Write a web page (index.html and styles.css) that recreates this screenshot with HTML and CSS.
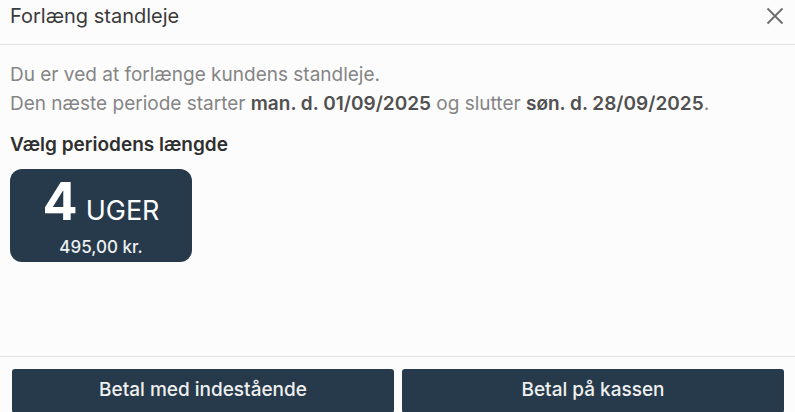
FILE: index.html
```html
<!DOCTYPE html>
<html>
<head>
  <title>Forlæng standleje</title>
  <link rel="stylesheet" href="styles.css">
</head>
<body>
  <div class="dialog">
    <div class="dialog-header">
      <h1 class="dialog-title">Forlæng standleje</h1>
      <span class="close-button">
        <svg width="18" height="18" viewBox="0 0 18 18">
          <path d="M1.5 1.5 L16.5 16.5 M16.5 1.5 L1.5 16.5" stroke="#6b6b6b" stroke-width="1.8" fill="none"/>
        </svg>
      </span>
    </div>

    <div class="dialog-body">
      <p class="info">Du er ved at forlænge kundens standleje.</p>
      <p class="info">Den næste periode starter <b>man. d. 01/09/2025</b> og slutter <b>søn. d. 28/09/2025</b>.</p>

      <h3 class="section-title">Vælg periodens længde</h3>

      <div class="period-list">
        <div class="period-card">
          <div class="period-length"><span class="period-number">4</span> UGER</div>
          <div class="period-price">495,00 kr.</div>
        </div>
      </div>
    </div>

    <div class="dialog-footer">
      <button class="pay-button">Betal med indestående</button>
      <button class="pay-button">Betal på kassen</button>
    </div>
  </div>
</body>
</html>
```

FILE: styles.css
```css
/* Basic page */
body {
  font-family: Inter, "Noto Sans", sans-serif;
  background-color: #fcfcfc;
  color: #333;
  margin: 0;
  padding: 0;
}

.dialog {
  display: flex;
  flex-direction: column;
  height: 412px;
  overflow: hidden;
}

/* Header */
.dialog-header {
  display: flex;
  justify-content: space-between;
  align-items: center;
  height: 32px;
  padding: 0 11px 12px 10px;
  border-bottom: 1px solid #e2e2e2;
}

.dialog-title {
  font-size: 20px;
  font-weight: 400;
  margin: 0;
  color: #3a3a3a;
}

.close-button {
  display: flex;
  cursor: pointer;
}

/* Body */
.dialog-body {
  flex: 1;
  padding: 15px 10px 0 10px;
}

.info {
  margin: 0;
  font-size: 19px;
  line-height: 29px;
  color: #858585;
}

.info b {
  color: #505050;
  font-weight: 600;
}

.section-title {
  margin: 15px 0 12px 0;
  font-size: 19px;
  line-height: 24px;
  font-weight: 600;
  color: #2f2f2f;
}

.period-list {
  display: flex;
  gap: 10px;
}

.period-card {
  width: 182px;
  height: 93px;
  background-color: #263a4b;
  border-radius: 12px;
  color: #fff;
  display: flex;
  flex-direction: column;
  align-items: center;
  justify-content: center;
}

.period-length {
  font-size: 27px;
  line-height: 46px;
  display: flex;
  align-items: baseline;
  gap: 8px;
  margin-top: 4px;
}

.period-number {
  font-size: 52px;
  font-weight: 700;
}

.period-price {
  font-size: 17px;
  font-weight: 500;
  margin-top: 3px;
  color: #eef0f2;
}

/* Footer */
.dialog-footer {
  display: flex;
  gap: 8px;
  border-top: 1px solid #e2e2e2;
  padding: 12px 11px 0 12px;
  height: 43px;
}

.pay-button {
  flex: 1;
  height: 44px;
  border: none;
  border-radius: 3px;
  background-color: #263a4b;
  color: #f0f0f0;
  font-family: Inter, "Noto Sans", sans-serif;
  font-size: 19px;
  font-weight: 500;
  padding: 0 0 3px 0;
}
```
